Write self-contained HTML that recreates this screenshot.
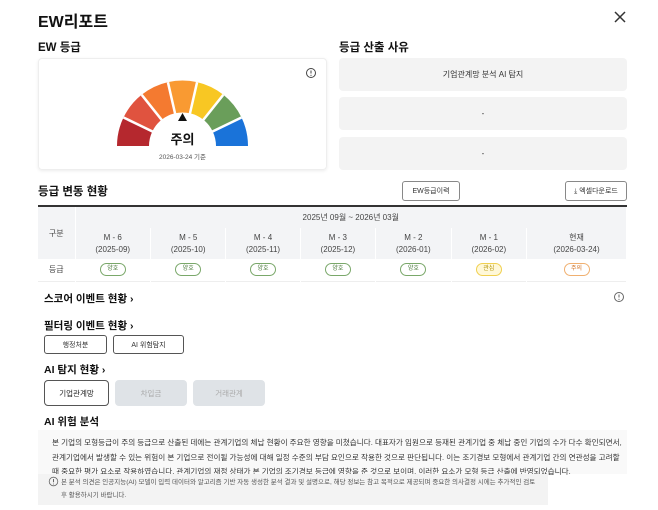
<!DOCTYPE html>
<html><head><meta charset="utf-8"><style>
*{margin:0;padding:0;box-sizing:border-box}
body{width:658px;height:510px;background:#fff;font-family:"Liberation Sans","Noto Sans CJK KR",sans-serif;color:#222;position:relative;overflow:hidden}
.a{position:absolute}
.h{font-weight:bold;font-size:11.5px;color:#111}
.box{position:absolute;left:339px;width:288px;height:33px;background:#f3f3f3;border-radius:4px;font-size:8px;display:flex;align-items:center;justify-content:center;color:#333}
.btn{position:absolute;border:1px solid #555;border-radius:3px;background:#fff;font-size:7px;display:flex;align-items:center;justify-content:center;color:#333}
table{position:absolute;left:38px;top:205px;width:589px;border-collapse:collapse;font-size:8px;color:#444;border-top:2px solid #333}
td{text-align:center;border-right:1px solid #fff}
.hd td{background:#f3f4f6}
.pill{display:inline-block;width:26px;height:13px;border:1px solid #7aa86a;border-radius:7px;font-size:6px;line-height:11px;color:#4a7a3a;background:#fff}
.tb{position:absolute;border-radius:4px;font-size:7.5px;display:flex;align-items:center;justify-content:center}
</style></head><body>
<div class="a" style="left:38px;top:8px;font-size:16px;font-weight:bold;color:#111">EW리포트</div>
<svg class="a" style="left:613px;top:10px" width="14" height="14"><path d="M2 2L12 12M12 2L2 12" stroke="#333" stroke-width="1.5"/></svg>
<div class="a h" style="left:38px;top:39px">EW 등급</div>
<div class="a" style="left:38px;top:58px;width:289px;height:112px;border:1px solid #eee;border-radius:4px;box-shadow:0 1px 3px rgba(0,0,0,.08)"></div>
<svg class="a" style="left:0;top:0" width="330" height="180">
<g fill="none" stroke-width="32">
<path d="M133 146A49.5 49.5 0 0 1 137.9 124.5" stroke="#b5282e"/>
<path d="M137.9 124.5A49.5 49.5 0 0 1 151.6 107.3" stroke="#e0533f"/>
<path d="M151.6 107.3A49.5 49.5 0 0 1 171.5 97.7" stroke="#f47a30"/>
<path d="M171.5 97.7A49.5 49.5 0 0 1 193.5 97.7" stroke="#f99a32"/>
<path d="M193.5 97.7A49.5 49.5 0 0 1 213.4 107.3" stroke="#f8c723"/>
<path d="M213.4 107.3A49.5 49.5 0 0 1 227.1 124.5" stroke="#6a9e5a"/>
<path d="M227.1 124.5A49.5 49.5 0 0 1 232 146" stroke="#1a73d9"/>
</g>
<g stroke="#fff" stroke-width="2.5">
<path d="M182.5 146L123.5 117.5M182.5 146L141.7 94.8M182.5 146L167.9 82.2M182.5 146L197.1 82.2M182.5 146L223.3 94.8M182.5 146L241.5 117.5"/>
</g>
<path d="M182.5 113L178 121H187Z" fill="#111"/>
<circle cx="311" cy="73" r="4.5" fill="none" stroke="#444" stroke-width="1"/><path d="M311 70.5V73.5" stroke="#444"/><circle cx="311" cy="75.3" r=".6" fill="#444"/>
</svg>
<div class="a" style="left:150px;top:129px;width:65px;text-align:center;font-size:13px;font-weight:bold;color:#111">주의</div>
<div class="a" style="left:140px;top:151px;width:85px;text-align:center;font-size:6.5px;color:#555">2026-03-24 기준</div>
<div class="a h" style="left:339px;top:39px">등급 산출 사유</div>
<div class="box" style="top:58px">기업관계망 분석 AI 탐지</div>
<div class="box" style="top:97px">-</div>
<div class="box" style="top:137px">-</div>
<div class="a h" style="left:38px;top:183px">등급 변동 현황</div>
<div class="btn" style="left:402px;top:181px;width:58px;height:20px;border-color:#888">EW등급이력</div>
<div class="btn" style="left:565px;top:181px;width:62px;height:20px;border-color:#888">⤓ 엑셀다운로드</div>
<table>
<tr class="hd" style="height:22px"><td rowspan="2" style="width:37px">구분</td><td colspan="7">2025년 09월 ~ 2026년 03월</td></tr>
<tr class="hd" style="height:31px;line-height:12px"><td>M - 6<br>(2025-09)</td><td>M - 5<br>(2025-10)</td><td>M - 4<br>(2025-11)</td><td>M - 3<br>(2025-12)</td><td>M - 2<br>(2026-01)</td><td>M - 1<br>(2026-02)</td><td>현재<br>(2026-03-24)</td></tr>
<tr style="height:22px;border-bottom:1px solid #eee"><td>등급</td><td><span class="pill">양호</span></td><td><span class="pill">양호</span></td><td><span class="pill">양호</span></td><td><span class="pill">양호</span></td><td><span class="pill">양호</span></td><td><span class="pill" style="border-color:#f0d050;background:#fff8d8;color:#b09000">관심</span></td><td><span class="pill" style="border-color:#f0b070;color:#d07020">주의</span></td></tr>
</table>
<div class="a h" style="left:44px;top:291px;font-size:10.5px">스코어 이벤트 현황 ›</div>
<svg class="a" style="left:613px;top:291px" width="12" height="12"><circle cx="6" cy="6" r="4.5" fill="none" stroke="#666"/><path d="M6 3.5V6.5" stroke="#666"/><circle cx="6" cy="8.3" r=".6" fill="#666"/></svg>
<div class="a h" style="left:44px;top:318px;font-size:10.5px">필터링 이벤트 현황 ›</div>
<div class="btn" style="left:44px;top:335px;width:63px;height:19px">행정처분</div>
<div class="btn" style="left:113px;top:335px;width:71px;height:19px">AI 위험탐지</div>
<div class="a h" style="left:44px;top:362px;font-size:10.5px">AI 탐지 현황 ›</div>
<div class="tb" style="left:44px;top:380px;width:65px;height:26px;border:1px solid #555;background:#fff;color:#222">기업관계망</div>
<div class="tb" style="left:115px;top:380px;width:72px;height:26px;background:#dfe3e7;color:#aaa">차입금</div>
<div class="tb" style="left:193px;top:380px;width:72px;height:26px;background:#dfe3e7;color:#aaa">거래관계</div>
<div class="a h" style="left:44px;top:414px;font-size:10.5px">AI 위험 분석</div>
<div class="a" style="left:38px;top:430px;width:589px;height:44px;background:#f9f9f9"></div>
<div class="a" style="left:52px;top:436px;width:576px;font-size:7.6px;line-height:14.5px;color:#333">본 기업의 모형등급이 주의 등급으로 산출된 데에는 관계기업의 체납 현황이 주요한 영향을 미쳤습니다. 대표자가 임원으로 등재된 관계기업 중 체납 중인 기업의 수가 다수 확인되면서, 관계기업에서 발생할 수 있는 위험이 본 기업으로 전이될 가능성에 대해 일정 수준의 부담 요인으로 작용한 것으로 판단됩니다. 이는 조기경보 모형에서 관계기업 간의 연관성을 고려할 때 중요한 평가 요소로 작용하였습니다. 관계기업의 재정 상태가 본 기업의 조기경보 등급에 영향을 준 것으로 보이며, 이러한 요소가 모형 등급 산출에 반영되었습니다.</div>
<div class="a" style="left:38px;top:474px;width:510px;height:31px;background:#f3f3f3"></div>
<svg class="a" style="left:48px;top:476px" width="11" height="11"><circle cx="5.5" cy="5.5" r="4.3" fill="none" stroke="#666" stroke-width=".8"/><path d="M5.5 3V6.3" stroke="#666"/><circle cx="5.5" cy="8" r=".5" fill="#666"/></svg>
<div class="a" style="left:61px;top:476px;width:476px;font-size:6.5px;line-height:13px;color:#555">본 분석 의견은 인공지능(AI) 모델이 입력 데이터와 알고리즘 기반 자동 생성한 분석 결과 및 설명으로, 해당 정보는 참고 목적으로 제공되며 중요한 의사결정 시에는 추가적인 검토 후 활용하시기 바랍니다.</div>
</body></html>
